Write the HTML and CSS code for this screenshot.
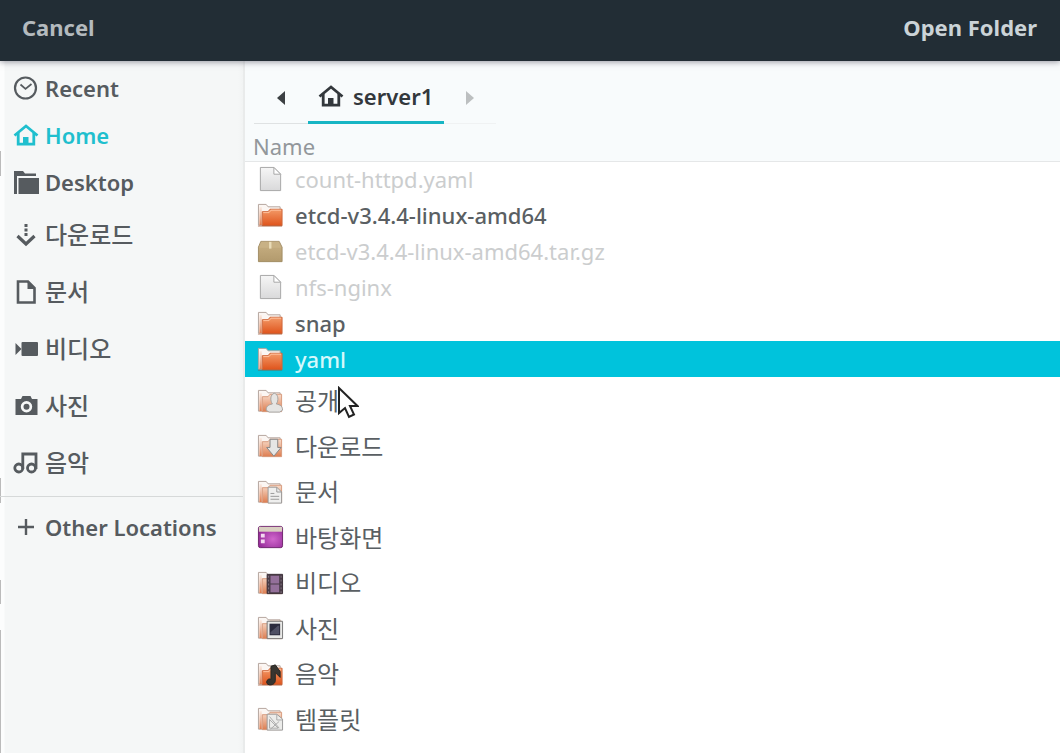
FILE: index.html
```html
<!DOCTYPE html>
<html lang="ko">
<head>
<meta charset="utf-8">
<meta name="viewport" content="width=device-width, initial-scale=1">
<title>Open Folder</title>
<link rel="stylesheet" href="styles.css">
</head>
<body>
<svg class="defs" aria-hidden="true">
  <defs>
    <linearGradient id="orange" x1="0" y1="0" x2="0" y2="1"><stop offset="0" stop-color="#f39a68"/><stop offset="1" stop-color="#df541c"/></linearGradient>
    <linearGradient id="pale" x1="0" y1="0" x2="0" y2="1"><stop offset="0" stop-color="#f8dccb"/><stop offset="1" stop-color="#dd7d50"/></linearGradient>
    <linearGradient id="spine" x1="0" y1="0" x2="0" y2="1"><stop offset="0" stop-color="#fbeee7"/><stop offset="1" stop-color="#df7a4b"/></linearGradient>
    <linearGradient id="paper" x1="0" y1="0" x2="0" y2="1"><stop offset="0" stop-color="#f6f6f6"/><stop offset="1" stop-color="#d9d9da"/></linearGradient>
    <linearGradient id="box" x1="0" y1="0" x2="0" y2="1"><stop offset="0" stop-color="#c9b184"/><stop offset="1" stop-color="#b29a6d"/></linearGradient>
    <radialGradient id="purple" cx=".6" cy=".6" r=".7"><stop offset="0" stop-color="#d067cc"/><stop offset="1" stop-color="#8f2493"/></radialGradient>
    <symbol id="home" viewBox="0 0 26 26"><path d="M1.500 13.500 13 4l11.500 9.500" fill="none" stroke="currentColor" stroke-width="2.800"/><path d="M5.200 11v11.200h15.600V11" fill="none" stroke="currentColor" stroke-width="2.800"/><path d="M10 22v-7h5.500v7z" fill="currentColor"/></symbol>
    <symbol id="folder" viewBox="0 0 28 28"><path d="M1.500 24V2.500h8l2 2.500H24v19z" fill="#fbf6f3" stroke="#b3a39b"/><path d="M2.500 5H5v19H2.500z" fill="url(#spine)"/><path d="M5.500 24.500V10h6l2-2.500H26v17z" fill="url(#orange)" stroke="#ce683c"/><path d="M6.500 11h6l2-2.500H25" fill="none" stroke="#ffc4a0"/><path d="M1 25h25" stroke="#9b4a28" opacity=".6"/></symbol>
    <symbol id="place" viewBox="0 0 28 28"><path d="M1.500 24V2.500h8l2 2.500H24v19z" fill="#fbf6f3" stroke="#b3a39b"/><path d="M2.500 5H5v19H2.500z" fill="url(#spine)"/><path d="M5.500 24.500V9h6l2-2.500H25.500v18z" fill="url(#pale)" stroke="#d79a7c"/></symbol>
    <symbol id="file" viewBox="0 0 28 28"><path d="M3.500 1.500h14l7 7v17h-21z" fill="url(#paper)" stroke="#a5a5a6"/><path d="M17.500 1.500v7h7z" fill="#fff" stroke="#a5a5a6"/></symbol>
  </defs>
</svg>
<div class="dialog">
  <header class="titlebar">
    <button class="title-button" type="button">Cancel</button>
    <h1 class="title">Open Folder</h1>
  </header>
  <div class="content">
    <nav class="sidebar" aria-label="Places">
      <a class="place" href="#recent"><svg class="icon" viewBox="0 0 26 26"><circle cx="12.500" cy="13" r="10.500" fill="none" stroke="currentColor" stroke-width="2.200"/><path d="m7.500 9.500 5 4.500 6-5" fill="none" stroke="currentColor" stroke-width="1.700"/></svg>Recent</a>
      <a class="place active" href="#home"><svg class="icon"><use href="#home"/></svg>Home</a>
      <a class="place" href="#desktop"><svg class="icon" viewBox="0 0 26 26"><path d="M1 2h9l2 2.500h11V7H4v18H1zM5.500 9H26v16H5.500z" fill="currentColor"/></svg>Desktop</a>
      <a class="place korean" href="#downloads"><svg class="icon" viewBox="0 0 26 26"><path d="M13 2v3m0 1.500v3m0 1.500v3" stroke="currentColor" stroke-width="3"/><path d="m4.500 14 8.500 8 8.500-8" fill="none" stroke="currentColor" stroke-width="3.200"/></svg>다운로드</a>
      <a class="place korean" href="#documents"><svg class="icon" viewBox="0 0 26 26"><path d="M5 2.500h10l6.500 6.500v14.500H5z" fill="none" stroke="currentColor" stroke-width="2.600"/><path d="M14.500 2v8H22z" fill="currentColor"/></svg>문서</a>
      <a class="place korean" href="#videos"><svg class="icon" viewBox="0 0 26 26"><rect x="8.500" y="6" width="16.500" height="14" rx="1" fill="currentColor"/><path d="M2.500 7 8.500 13l-6 6z" fill="currentColor"/></svg>비디오</a>
      <a class="place korean" href="#pictures"><svg class="icon" viewBox="0 0 26 26"><path fill-rule="evenodd" d="M2.500 6H8l1.500-3h8L19 6h5.500v16h-22zM13.500 8a5.700 5.700 0 1 0 0 11.400A5.700 5.700 0 1 0 13.500 8z" fill="currentColor"/><circle cx="13.500" cy="13.700" r="3" fill="currentColor"/></svg>사진</a>
      <a class="place korean" href="#music"><svg class="icon" viewBox="0 0 26 26"><g fill="none" stroke="currentColor" stroke-width="2.800"><circle cx="5.800" cy="18" r="4"/><circle cx="18.500" cy="18" r="4"/><path d="M9.800 19V4h13.200v15"/></g></svg>음악</a>
      <hr class="divider">
      <a class="place" href="#other"><svg class="icon" viewBox="0 0 26 26"><path d="M5 13h16M13 5v16" stroke="currentColor" stroke-width="2.400"/></svg>Other Locations</a>
    </nav>
    <main class="browser">
      <div class="pathbar">
        <button class="arrow" type="button" aria-label="Back"><svg class="arrow-icon" viewBox="0 0 10 16"><path d="M9 1v14L1 8z" fill="currentColor"/></svg></button>
        <button class="crumb" type="button"><svg class="icon"><use href="#home"/></svg>server1</button>
        <button class="arrow next" type="button" aria-label="Forward" disabled><svg class="arrow-icon" viewBox="0 0 10 16"><path d="M1 1v14l8-7z" fill="currentColor"/></svg></button>
      </div>
      <table class="files">
        <thead><tr><th scope="col">Name</th></tr></thead>
        <tbody>
          <tr class="muted"><td><div class="entry"><svg class="file-icon"><use href="#file"/></svg>count-httpd.yaml</div></td></tr>
          <tr><td><div class="entry"><svg class="file-icon"><use href="#folder"/></svg>etcd-v3.4.4-linux-amd64</div></td></tr>
          <tr class="muted"><td><div class="entry"><svg class="file-icon" viewBox="0 0 28 28"><path d="M4 3.500h19l3 6v15H1.500v-15z" fill="url(#box)" stroke="#a18c65"/><path d="M4.500 4h18l2.500 6H2z" fill="#c8b185"/><path d="M12.500 4h2.500v7h-2.500z" fill="#eadcb9"/></svg>etcd-v3.4.4-linux-amd64.tar.gz</div></td></tr>
          <tr class="muted"><td><div class="entry"><svg class="file-icon"><use href="#file"/></svg>nfs-nginx</div></td></tr>
          <tr><td><div class="entry"><svg class="file-icon"><use href="#folder"/></svg>snap</div></td></tr>
          <tr class="selected" aria-selected="true"><td><div class="entry"><svg class="file-icon"><use href="#folder"/></svg>yaml</div></td></tr>
        </tbody>
        <tbody class="localized">
          <tr><td><div class="entry"><svg class="file-icon" viewBox="0 0 28 28"><use href="#place"/><path d="M9.500 23c0-4 2-5.500 6.500-6.500-2.500-3-2.500-10 2-11 4.500 1 4.500 8 2 11 4.500 1 6.500 2.500 6.500 6.500l-3 2h-11z" fill="#e5e4e2" stroke="#a3a2a0"/></svg><span class="pointed">공개<svg class="cursor" viewBox="0 0 22 34" aria-hidden="true"><path d="M2 2v25l6-5 4 9 5-2.500-4-8.500h7.500z" fill="#fff" stroke="#222" stroke-width="2"/></svg></span></div></td></tr>
          <tr><td><div class="entry"><svg class="file-icon" viewBox="0 0 28 28"><use href="#place"/><path d="M13.500 6.500h8V15H25l-7.500 9L10 15h3.500z" fill="#e6e6e5" stroke="#858585"/></svg>다운로드</div></td></tr>
          <tr><td><div class="entry"><svg class="file-icon" viewBox="0 0 28 28"><use href="#place"/><path d="M11.500 8.500h9l5 5v11.500h-14z" fill="#efefee" stroke="#989898"/><path d="M20.500 8.500v5h5M14 15h4m-4 3h9m-9 3h9" fill="none" stroke="#999"/></svg>문서</div></td></tr>
          <tr><td><div class="entry"><svg class="file-icon" viewBox="0 0 28 28"><rect x="1.500" y="2.500" width="25" height="22" rx="2" fill="url(#purple)" stroke="#6e276c"/><path d="M2 3h24v5H2z" fill="#d9cfc1"/><path d="M4 10h4v4H4zm0 6h4v4H4z" fill="#f4d8f1"/></svg>바탕화면</div></td></tr>
          <tr><td><div class="entry"><svg class="file-icon" viewBox="0 0 28 28"><use href="#place"/><path d="M10.500 4.500h16v20h-16z" fill="#4a3c48" stroke="#3a2f37"/><path d="M14 6h9v8h-9zm0 9h9v8h-9z" fill="#94709a"/><path d="M12 6v18m13-18v18" stroke="#827680" stroke-dasharray="2 2"/></svg>비디오</div></td></tr>
          <tr><td><div class="entry"><svg class="file-icon" viewBox="0 0 28 28"><use href="#place"/><path d="M10.500 6.500h16v18h-16z" fill="#e9e9e7" stroke="#777"/><path d="M13 9h11v12H13z" fill="#2c2b3d"/><path d="m14 18 8-7 1 1v8h-9z" fill="#505064"/></svg>사진</div></td></tr>
          <tr><td><div class="entry"><svg class="file-icon" viewBox="0 0 28 28"><use href="#folder"/><path d="M14.500 5.500 19 4l5 7v6l-5-5v8c0 6-9 6-9 2 0-3 3-4 4.500-3z" fill="#383530" stroke="#272522"/></svg>음악</div></td></tr>
          <tr><td><div class="entry"><svg class="file-icon" viewBox="0 0 28 28"><use href="#place"/><path d="M10.500 8.500h10l6 5v11.500h-16z" fill="#ececea" stroke="#999"/><path d="M20.500 8.500v6h6M13 11l10 12m0-7-9 8m-1-10v9h9z" fill="none" stroke="#aaa"/></svg>템플릿</div></td></tr>
        </tbody>
      </table>
    </main>
  </div>
</div>
</body>
</html>
```
FILE: styles.css
```css
* { box-sizing: border-box; }
body {
  margin: 0;
  font-family: "Noto Sans", "Noto Sans CJK KR", sans-serif;
  font-size: 22px;
  line-height: 32px;
  color: #5a5f63;
}
button { font: inherit; border: 0; background: none; padding: 0; color: inherit; cursor: pointer; }
.defs { position: absolute; width: 0; height: 0; }
.dialog { min-height: 100vh; display: flex; flex-direction: column; background: #fff; }
.titlebar {
  position: relative;
  z-index: 1;
  display: flex;
  justify-content: space-between;
  align-items: center;
  height: 61px;
  padding: 0 23px 7px 22px;
  background: #222d35;
  box-shadow: 0 1px 6px #55556699;
  font-weight: 700;
}
.title-button { color: #b4babe; }
.title { margin: 0; font-size: 22px; font-weight: 700; color: #cbd3d7; }
.content { flex: 1; display: flex; }
.sidebar {
  flex: 0 0 245px;
  display: flex;
  flex-direction: column;
  padding-top: 4px;
  border-right: 2px solid #e9ebeb;
  background:
    linear-gradient(#0000 90px, #bbb 0 115px, #0000 0 417px, #bbb 0 442px, #0000 0 519px, #bbb 0 543px, #0000 0 569px, #bbb 0) left / 1px 100% no-repeat,
    linear-gradient(90deg, #fcfdfd 4px, #f5f7f7 5px, #f5f7f7 238px, #f1f3f3);
}
.place {
  display: flex;
  align-items: center;
  gap: 6px;
  height: 47px;
  padding: 0 0 2px 13px;
  color: #565b5f;
  font-weight: 600;
  text-decoration: none;
  white-space: nowrap;
}
.place.active { color: #1fbfce; }
.place.korean { height: 57px; padding-bottom: 0; font-size: 24px; font-weight: 500; }
.icon { flex: none; width: 26px; height: 26px; }
.divider { width: 100%; margin: 5px 0 7px; border: 0; border-top: 1px solid #d6d9d9; }
.browser { flex: 1; min-width: 0; background: #fff; }
.pathbar { display: flex; height: 63px; padding: 11px 9px 0; background: #f8fbfc; }
.arrow { width: 54px; border-bottom: 1px solid #dfe2e3; color: #3c4043; }
.next { width: 52px; border-color: #f0f2f3; color: #bcbfc0; }
.arrow-icon { display: block; width: 10px; height: 16px; margin: 0 auto; }
.crumb {
  display: flex;
  align-items: center;
  gap: 9px;
  padding: 0 11px 1px 10px;
  border-bottom: 3px solid #18b5c4;
  color: #33383c;
  font-weight: 600;
}
.files { width: 100%; border-collapse: collapse; }
.files th {
  height: 37px;
  padding: 8px 8px 0;
  border-bottom: 1px solid #e5e7e8;
  background: #f8fbfc;
  color: #92979b;
  font-weight: 400;
  line-height: 28px;
  text-align: left;
}
.files td { height: 36px; padding: 0 12px; }
.entry { display: flex; align-items: center; gap: 11px; white-space: nowrap; font-weight: 500; }
.file-icon { flex: none; width: 27px; height: 27px; }
.muted { color: #cbcdce; }
.muted .entry { font-weight: 400; }
.selected { background: #00c3dc; color: #d5f8fb; }
.localized { font-size: 24px; }
.localized .entry { font-weight: 400; }
.localized td { height: 46px; padding-top: 2px; }
.localized tr:nth-child(even) td { height: 45px; }
.pointed { position: relative; }
.cursor { position: absolute; left: 42px; top: 1px; width: 22px; height: 34px; }
```
